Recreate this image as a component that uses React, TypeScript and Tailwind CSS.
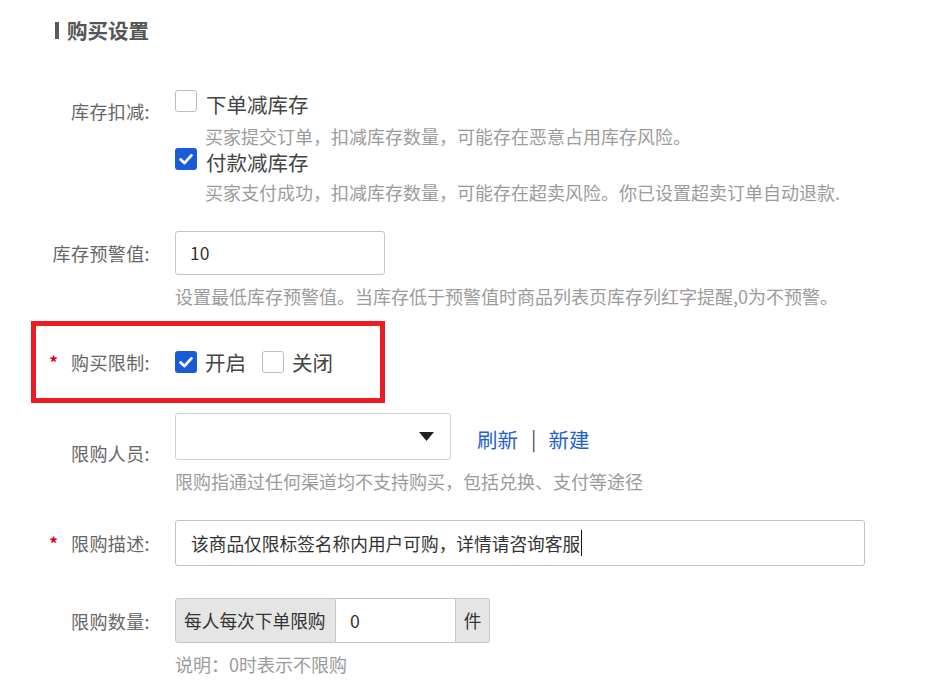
import React from "react";

function Box({ checked }: { checked?: boolean }) {
  if (checked) {
    return (
      <span className="flex h-[22px] w-[22px] flex-none items-center justify-center rounded-[3px] bg-[#1a5cd8]">
        <svg width="22" height="22" viewBox="0 0 22 22" fill="none">
          <path d="M5.6 11.4L9.4 15.1L16.4 7.4" stroke="#fff" strokeWidth="2.8" strokeLinecap="round" strokeLinejoin="round" />
        </svg>
      </span>
    );
  }
  return <span className="block h-[22px] w-[22px] flex-none rounded-[3px] border border-[#bdbdbd] bg-white" />;
}

function Label({ text, req, className }: { text: string; req?: boolean; className?: string }) {
  return (
    <div className={"flex flex-none items-center justify-end text-[18px] leading-[24px] text-[#666] " + (className ?? "w-[150px]")}>
      {req && <span className="mr-[13px] text-[17px] font-bold text-[#e0001b]">*</span>}
      <span className="tracking-[0.4px]">{text}</span>
    </div>
  );
}

function Hint({ children, className }: { children: React.ReactNode; className?: string }) {
  return <div className={"text-[18px] leading-[24px] text-[#9b9b9b] " + (className ?? "")}>{children}</div>;
}

export default function App() {
  return (
    <div className="relative h-[691px] w-[944px] overflow-hidden bg-white font-['Noto_Sans_CJK_SC','Noto_Sans',sans-serif]">
      {/* 标题 */}
      <div className="ml-[55px] mt-[18px] flex h-[24px] items-center">
        <span className="h-[17px] w-[4px] bg-[#5a5a5a]" />
        <span className="ml-[8px] text-[20.5px] font-bold text-[#555]">购买设置</span>
      </div>

      {/* 库存扣减 */}
      <div className="mt-[48px] flex">
        <Label text="库存扣减:" className="w-[150px] mt-[9px] self-start" />
        <div className="ml-[25px] flex flex-col">
          <div className="flex h-[28px] items-start">
            <Box />
            <span className="ml-[9px] text-[20.5px] leading-[28px] text-[#444]">下单减库存</span>
          </div>
          <Hint className="ml-[30px] mt-[6px]">买家提交订单，扣减库存数量，可能存在恶意占用库存风险。</Hint>
          <div className="flex h-[28px] items-start">
            <Box checked />
            <span className="ml-[9px] text-[20.5px] leading-[28px] text-[#444]">付款减库存</span>
          </div>
          <Hint className="ml-[30px] mt-[4px]">买家支付成功，扣减库存数量，可能存在超卖风险。你已设置超卖订单自动退款.</Hint>
        </div>
      </div>

      {/* 库存预警值 */}
      <div className="mt-[27px] flex">
        <Label text="库存预警值:" className="w-[150px] h-[44px]" />
        <div className="ml-[25px] flex flex-col">
          <div className="flex h-[44px] w-[210px] items-center rounded-[3px] border border-[#c6c6c6] pl-[14px] text-[17.5px] text-[#333]">10</div>
          <Hint className="mt-[9px]">设置最低库存预警值。当库存低于预警值时商品列表页库存列红字提醒,0为不预警。</Hint>
        </div>
      </div>

      {/* 购买限制 */}
      <div className="ml-[31px] mt-[13px] flex h-[82px] w-[354px] items-center border-[5px] border-[#ec1c24]">
        <Label text="购买限制:" req className="w-[114px]" />
        <div className="ml-[25px] flex items-center">
          <Box checked />
          <span className="ml-[8px] text-[20.5px] leading-[28px] text-[#444]">开启</span>
          <span className="ml-[16px]" />
          <Box />
          <span className="ml-[8px] text-[20.5px] leading-[28px] text-[#444]">关闭</span>
        </div>
      </div>

      {/* 限购人员 */}
      <div className="mt-[10px] flex">
        <Label text="限购人员:" className="w-[150px] mt-[28px] self-start" />
        <div className="ml-[25px] flex flex-col">
          <div className="flex items-center">
            <div className="flex h-[47px] w-[276px] items-center justify-end rounded-[3px] border border-[#d2d2d2] pr-[16px]">
              <svg width="15" height="9" viewBox="0 0 15 9">
                <path d="M0 0H15L7.5 9Z" fill="#222" />
              </svg>
            </div>
            <span className="ml-[26px] mt-[5px] text-[20.5px] text-[#1f5fd0]">刷新</span>
            <span className="ml-[13px] mt-[5px] text-[20px] text-[#555]">|</span>
            <span className="ml-[12px] mt-[5px] text-[20.5px] text-[#1f5fd0]">新建</span>
          </div>
          <Hint className="mt-[9px]">限购指通过任何渠道均不支持购买，包括兑换、支付等途径</Hint>
        </div>
      </div>

      {/* 限购描述 */}
      <div className="mt-[27px] flex items-center">
        <Label text="限购描述:" req />
        <div className="ml-[25px] flex h-[46px] w-[690px] items-center rounded-[3px] border border-[#c4c4c4] pl-[15px] text-[17.7px] text-[#333]">
          <span>该商品仅限标签名称内用户可购，详情请咨询客服</span>
          <span className="ml-[1px] h-[26px] w-[1px] bg-[#111]" />
        </div>
      </div>

      {/* 限购数量 */}
      <div className="mt-[32px] flex">
        <Label text="限购数量:" className="w-[150px] h-[45px]" />
        <div className="ml-[25px] flex flex-col">
          <div className="flex h-[45px] text-[17.7px] text-[#333]">
            <div className="flex w-[161px] items-center rounded-l-[3px] border border-[#c6c6c6] bg-[#e5e5e5] pl-[8px]">每人每次下单限购</div>
            <div className="flex w-[119px] items-center border-y border-[#c6c6c6] bg-white pl-[14px]">0</div>
            <div className="flex w-[35px] items-center justify-center rounded-r-[3px] border border-[#c6c6c6] bg-[#e5e5e5]">件</div>
          </div>
          <Hint className="mt-[9px]">说明：0时表示不限购</Hint>
        </div>
      </div>
    </div>
  );
}
